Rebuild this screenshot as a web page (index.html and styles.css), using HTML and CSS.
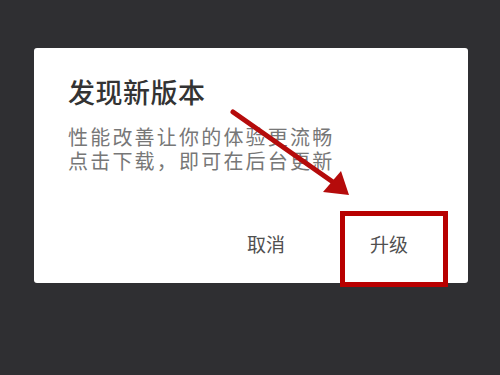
FILE: index.html
```html
<!DOCTYPE html>
<html lang="zh">
<head>
<meta charset="utf-8">
<link rel="stylesheet" href="styles.css">
</head>
<body>
<div class="screen">
  <div class="dialog">
    <h1 class="title">发现新版本</h1>
    <p class="message">性能改善让你的体验更流畅<br>点击下载，即可在后台更新</p>
    <div class="actions">
      <span class="btn btn-cancel">取消</span>
      <span class="btn btn-ok">升级</span>
    </div>
  </div>
  <div class="highlight"></div>
  <svg class="arrow" width="500" height="375" viewBox="0 0 500 375">
    <line x1="233" y1="112" x2="340" y2="187" stroke="#b50b0b" stroke-width="5" stroke-linecap="round"/>
    <polygon points="349,195 323,192 341,171" fill="#b50b0b"/>
  </svg>
</div>
</body>
</html>
```
FILE: styles.css
```css
html, body {
  margin: 0;
  padding: 0;
  background: #2f2f32;
}
.screen {
  position: relative;
  width: 500px;
  height: 375px;
  overflow: hidden;
  padding-top: 48px;
  box-sizing: border-box;
  font-family: "Noto Sans CJK SC", "Noto Sans", sans-serif;
}
.dialog {
  margin-left: 34px;
  width: 434px;
  height: 235px;
  background: #ffffff;
  border-radius: 3px;
  box-sizing: border-box;
  padding: 26px 34px 0 34px;
  display: flex;
  flex-direction: column;
}
.title {
  margin: 0;
  font-size: 27px;
  line-height: 36px;
  font-weight: 500;
  color: #333333;
  letter-spacing: 0.5px;
}
.message {
  margin: 15px 0 0 0;
  font-size: 20px;
  line-height: 24px;
  color: #777777;
  letter-spacing: 2.2px;
}
.actions {
  margin-top: 59px;
  display: flex;
  justify-content: flex-end;
  gap: 85px;
  padding-right: 26px;
}
.btn {
  font-size: 19px;
  line-height: 24px;
  color: #505050;
}
.highlight {
  position: absolute;
  left: 340px;
  top: 211px;
  width: 108px;
  height: 76px;
  border: 5px solid #b80000;
  box-sizing: border-box;
}
.arrow {
  position: absolute;
  left: 0;
  top: 0;
}
```
